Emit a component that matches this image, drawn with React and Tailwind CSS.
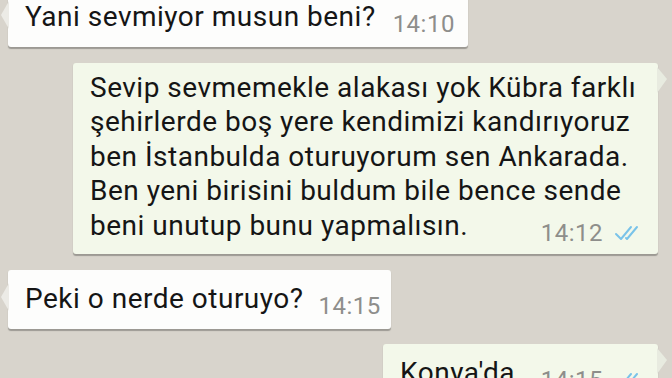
import React from 'react'

const font = { fontFamily: 'Roboto, "Noto Sans", "Liberation Sans", sans-serif' }

// message time + optional double tick
function Stamp({ time, read }) {
  return (
    <span className="flex items-center shrink-0 translate-y-[6px] text-[24px] tracking-[0.5px] leading-none text-[#8e8e8b]">
      {time}
      {read && (
        <svg width="34" height="18" viewBox="0 0 34 18" className="ml-[10px]" fill="none" stroke="#79c3e9" strokeWidth="2" strokeLinecap="round" strokeLinejoin="round">
          <path d="M3 10 L8 15 L18 3" />
          <path d="M13 14 L14 15 L24 3" />
        </svg>
      )}
    </span>
  )
}

function Incoming({ children, className = '' }) {
  return (
    <div className={`relative self-start ml-[8px] rounded-[3px] bg-[#fdfdfc] shadow-[0_1.5px_1px_rgba(0,0,0,0.28)] ${className}`}>
      <svg width="9" height="28" viewBox="0 0 9 28" className="absolute -left-[8px] top-[13px]">
        <path d="M9 0 L1 14 L9 28 Z" fill="#ecebe6" />
      </svg>
      {children}
    </div>
  )
}

function Outgoing({ children, className = '' }) {
  return (
    <div className={`relative self-end mr-[14px] rounded-[3px] bg-[#f3f8ea] shadow-[0_1.5px_1px_rgba(0,0,0,0.28)] ${className}`}>
      <svg width="11" height="28" viewBox="0 0 11 28" className="absolute -right-[10px] top-[4px]">
        <path d="M0 0 L10 12 L0 26 Z" fill="#e8ebe0" />
      </svg>
      {children}
    </div>
  )
}

export default function App() {
  return (
    <div style={font} className="w-[672px] h-[378px] overflow-hidden bg-[#d8d4cc] text-[28px] tracking-[0.5px] leading-[34.5px] text-[#151515]">
      <div className="flex flex-col">
        <Incoming className="-mt-[12px] pt-[12px] pb-[12px] pl-[17px] pr-[13px]">
          <div className="flex items-baseline">
            <span>Yani sevmiyor musun beni?</span>
            <span className="ml-[17px]"><Stamp time="14:10" /></span>
          </div>
        </Incoming>

        <Outgoing className="mt-[16px] w-[585px] pt-[8px] pb-[11px] pl-[17px] pr-[11px]">
          <div>Sevip sevmemekle alakası yok Kübra farklı</div>
          <div>şehirlerde boş yere kendimizi kandırıyoruz</div>
          <div>ben İstanbulda oturuyorum sen Ankarada.</div>
          <div>Ben yeni birisini buldum bile bence sende</div>
          <div className="flex items-baseline">
            <span>beni unutup bunu yapmalısın.</span>
            <span className="ml-auto"><Stamp time="14:12" read /></span>
          </div>
        </Outgoing>

        <Incoming className="mt-[16px] pt-[12px] pb-[12px] pl-[17px] pr-[10px]">
          <div className="flex items-baseline">
            <span>Peki o nerde oturuyo?</span>
            <span className="ml-[15px]"><Stamp time="14:15" /></span>
          </div>
        </Incoming>

        <Outgoing className="mt-[15px] w-[275px] pt-[12px] pb-[12px] pl-[17px] pr-[11px]">
          <div className="flex items-baseline">
            <span>Konya'da</span>
            <span className="ml-auto"><Stamp time="14:15" read /></span>
          </div>
        </Outgoing>
      </div>
    </div>
  )
}
